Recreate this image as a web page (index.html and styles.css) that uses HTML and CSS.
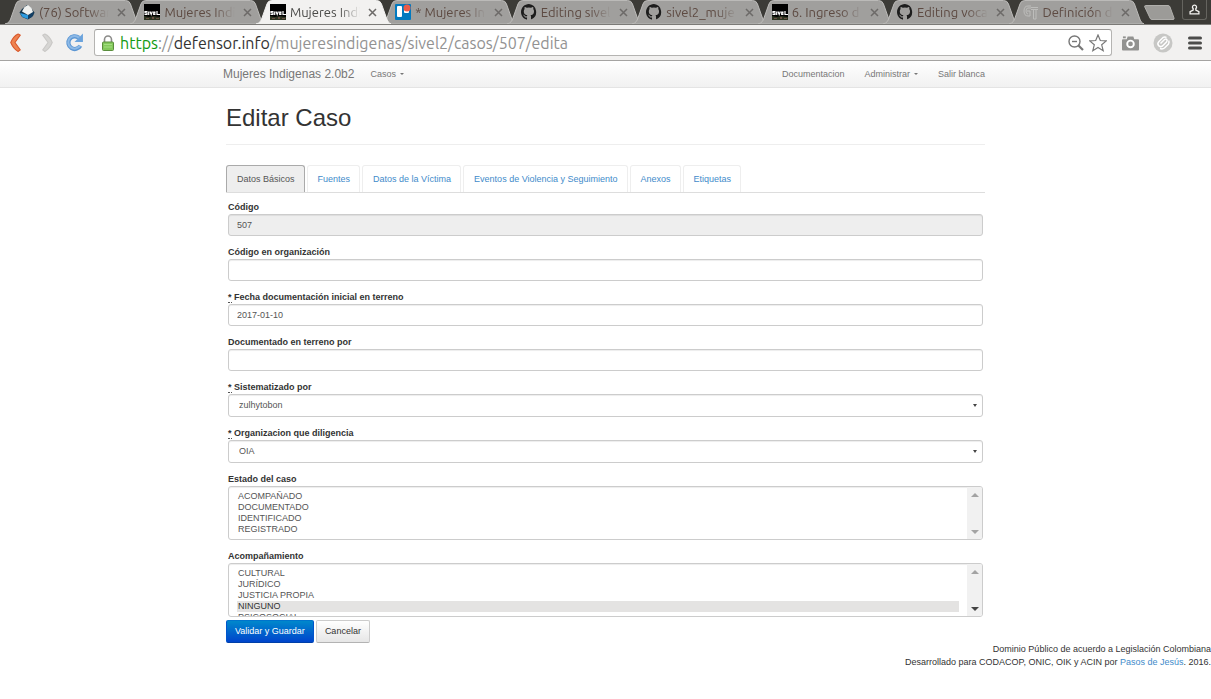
FILE: index.html
```html
<!DOCTYPE html>
<html lang="es">
<head>
<meta charset="utf-8">
<meta name="viewport" content="width=device-width, initial-scale=1">
<title>Mujeres Indigenas - Editar Caso</title>
<link rel="stylesheet" href="styles.css">
</head>
<body>
<svg class="defs" aria-hidden="true">
  <symbol id="tab-shape" viewBox="0 0 136 24" preserveAspectRatio="none">
    <path d="M0 24C4 23 5 21 6 18L11 4Q12 0.500 16 0.500H121Q125 0.500 126 4L131 18C132 21 133 23 136 24Z"/>
  </symbol>
  <symbol id="github" viewBox="0 0 16 16">
    <path d="M8 0C3.580 0 0 3.580 0 8c0 3.540 2.290 6.530 5.470 7.590.4.070.550-.170.550-.380V13.500c-2 .4-2.500-.9-2.700-1.300-.3-.5-.6-.8-.9-1-.3-.2-.6-.5 0-.5.6 0 1 .5 1.200.8.7 1.200 1.800.9 2.300.7.1-.5.3-.9.5-1.100-2-.2-3.600-.9-3.600-3.900 0-.9.3-1.600.8-2.200-.1-.2-.4-1 .1-2.100 0 0 .7-.2 2.200.8a7.500 7.500 0 0 1 4 0c1.500-1 2.200-.8 2.200-.8.5 1.100.2 1.900.1 2.100.5.6.8 1.300.8 2.200 0 3.100-1.800 3.700-3.600 3.900.3.300.6.800.6 1.500v2.200c0 .2.100.5.500.4A8 8 0 0 0 8 0Z"/>
  </symbol>
  <symbol id="sivel" viewBox="0 0 16 16">
    <path fill="#000" d="M0 0h16v16H0z"/>
    <path fill="#2d3421" d="M0 12l5 1 4-1 7 1v3H0z"/>
    <path fill="#684e43" d="M2 14h3v1H2zM8 13h2v2H8zM12 14h3v1h-3z"/>
    <path stroke="#fff" stroke-width="1.200" fill="none" d="M3.500 7.600H1V9h2v1.500H.5M4.700 7.500V11M6 7.500L7.200 10.500 8.400 7.500M11.500 8H9.700v2.500h1.800M9.500 9.200h2M13 7v3.500h3"/>
  </symbol>
  <symbol id="close" viewBox="0 0 9 9"><path d="M1 1l7 7M8 1L1 8" fill="none" stroke="currentColor" stroke-width="1.500"/></symbol>
</svg>

<header class="browser">
  <div class="tabstrip">
    <div class="tabs">
      <div class="tab"><svg class="shape"><use href="#tab-shape"/></svg>
        <svg class="fav" viewBox="0 0 16 16"><path fill="#17384f" d="M.5 8.500L3 5l5-4 4 3 3.500 4.500L14 12l-5 3.500L3 13z"/><path fill="#2d9be0" d="M1 9l8 2v4l-5.500-2z"/><path fill="#123f66" d="M9 11l6-3-2 5-4 2z"/><path fill="#f0f1ef" d="M3 7.500L5.500 3 9 1l3.500 3L14 8l-5 3z"/></svg>
        <span class="name">(76) Softwar</span><button class="x" aria-label="Cerrar"><svg><use href="#close"/></svg></button></div>
      <div class="tab"><svg class="shape"><use href="#tab-shape"/></svg><svg class="fav"><use href="#sivel"/></svg>
        <span class="name">Mujeres Indi</span><button class="x" aria-label="Cerrar"><svg><use href="#close"/></svg></button></div>
      <div class="tab active"><svg class="shape"><use href="#tab-shape"/></svg><svg class="fav"><use href="#sivel"/></svg>
        <span class="name">Mujeres Indi</span><button class="x" aria-label="Cerrar"><svg><use href="#close"/></svg></button></div>
      <div class="tab"><svg class="shape"><use href="#tab-shape"/></svg>
        <svg class="fav" viewBox="0 0 16 16"><rect width="16" height="16" rx="1" fill="#0079bf"/><rect x="2" y="2" width="5" height="11" rx="1" fill="#fff"/><rect x="9" y="2" width="5" height="7" rx="1" fill="#fff"/><circle cx="12" cy="4" r="3.500" fill="#eb5a46"/></svg>
        <span class="name">* Mujeres In</span><button class="x" aria-label="Cerrar"><svg><use href="#close"/></svg></button></div>
      <div class="tab"><svg class="shape"><use href="#tab-shape"/></svg><svg class="fav"><use href="#github"/></svg>
        <span class="name">Editing sivel</span><button class="x" aria-label="Cerrar"><svg><use href="#close"/></svg></button></div>
      <div class="tab"><svg class="shape"><use href="#tab-shape"/></svg><svg class="fav"><use href="#github"/></svg>
        <span class="name">sivel2_muje</span><button class="x" aria-label="Cerrar"><svg><use href="#close"/></svg></button></div>
      <div class="tab"><svg class="shape"><use href="#tab-shape"/></svg><svg class="fav"><use href="#sivel"/></svg>
        <span class="name">6. Ingreso d</span><button class="x" aria-label="Cerrar"><svg><use href="#close"/></svg></button></div>
      <div class="tab"><svg class="shape"><use href="#tab-shape"/></svg><svg class="fav"><use href="#github"/></svg>
        <span class="name">Editing voca</span><button class="x" aria-label="Cerrar"><svg><use href="#close"/></svg></button></div>
      <div class="tab"><svg class="shape"><use href="#tab-shape"/></svg>
        <svg class="fav outline" viewBox="0 0 16 16"><path d="M8 2H5Q1 2 1 7t4 5h2V7H4M8 4H5Q3 4 3 7t2 3M8 5.500h7M8 3.500h7M10.500 5.500V15M13 5.500V15M10.500 15H13"/></svg>
        <span class="name">Definición d</span><button class="x" aria-label="Cerrar"><svg><use href="#close"/></svg></button></div>
    </div>
    <button class="newtab" aria-label="Nueva pestaña"><svg viewBox="0 0 31 15"><path d="M1.500 .5H24Q25.500 .5 26 2l4 11q.5 1.500-1 1.500H8Q6.500 14.500 6 13L.8 2Q.3 .5 1.500 .5Z" fill="#9c9b98" stroke="#b0afac"/></svg></button>
    <button class="user" aria-label="Usuario"><svg viewBox="0 0 10 10"><path d="M5 1a1.800 1.800 0 0 1 1.200 3.200V5.500L9 7v2H1V7l2.800-1.500V4.200A1.800 1.800 0 0 1 5 1Z" fill="none" stroke="#f4f3f1" stroke-width="1.200"/></svg></button>
  </div>
  <div class="toolbar">
    <button class="tool back" aria-label="Atrás"><svg viewBox="0 0 12 18"><path d="M8.500 1l2 1L5.500 9l5 7-2 1.500Q4 15 1.500 9 4 3 8.500 1Z" fill="#ee8350" stroke="#d9572a"/></svg></button>
    <button class="tool fwd" aria-label="Adelante"><svg viewBox="0 0 12 18"><path d="M3.500 1l-2 1 5 7-5 7 2 1.500Q8 15 10.500 9 8 3 3.500 1Z" fill="#d6d5d3" stroke="#c9c8c6"/></svg></button>
    <button class="tool reload" aria-label="Recargar"><svg viewBox="0 0 18 18"><path d="M13 4.500A6 6 0 1 0 14.500 12" fill="none" stroke="#5b96d3" stroke-width="4"/><path d="M13.500 4.800A6 6 0 1 0 14.200 12" fill="none" stroke="#8db9e6" stroke-width="2"/><path d="M17 .5V8.500H9z" fill="#6ba3dc"/></svg></button>
    <div class="address">
      <svg class="lock" viewBox="0 0 12 16"><path d="M2.500 8V4.500a3.500 3.500 0 0 1 7 0V8" fill="none" stroke="#8b8b89" stroke-width="1.600"/><rect x=".5" y="7" width="11" height="8.500" rx="1" fill="#83c95b" stroke="#5a8d3d"/><path d="M2 9.500h8M2 12h8" stroke="#a5de83"/></svg>
      <div class="url" role="textbox" aria-label="Dirección" contenteditable="true" spellcheck="false"><span class="scheme">https</span>://<span class="host">defensor.info</span>/mujeresindigenas/sivel2/casos/507/edita</div>
      <svg class="zoom" viewBox="0 0 16 16" fill="none" stroke="#777"><circle cx="6.500" cy="6.500" r="5.500" stroke-width="1.400"/><path d="M4 6.500h5" stroke-width="1.400"/><path d="M10.500 10.500l4.500 4.500" stroke-width="2.200"/></svg>
      <svg class="star" viewBox="0 0 18 18"><path d="M9 1l2.300 5.500 6 .4-4.600 3.900 1.500 5.900L9 13.500l-5.200 3.200 1.500-5.900L.7 6.900l6-.4z" fill="#fff" stroke="#777" stroke-width="1.200"/></svg>
    </div>
    <button class="tool cam" aria-label="Captura"><svg viewBox="0 0 18 16"><path fill="#929290" d="M1 4h4l1-3h6l1 3h4q1 0 1 1v10q0 1-1 1H1q-1 0-1-1V5q0-1 1-1z"/><path fill="#929290" d="M1 1h3v2H1z"/><circle cx="9" cy="9" r="3.500" fill="#929290" stroke="#fff" stroke-width="2"/></svg></button>
    <button class="tool clip" aria-label="Extensión"><svg viewBox="0 0 20 20"><circle cx="10" cy="10" r="9.500" fill="#c7c7c5"/><path d="M7.500 10.500l4-4q1.500-1 2.300 0t-.3 2.500L9.500 13M9.500 13q-2.500 1.500-4-.5T6 8.500l4-4q2-1 3.500 0M7 15.500q2.500 1 4.500-.5l4-4q1-2 .2-3.500" fill="none" stroke="#fff" stroke-width="1.500"/></svg></button>
    <button class="tool menu" aria-label="Menú"><svg viewBox="0 0 14 14"><path d="M1.500 2h11M1.500 7h11M1.500 12h11" stroke="#4c4c4a" stroke-width="3" stroke-linecap="round"/></svg></button>
  </div>
</header>

<nav class="navbar">
  <div class="container nav-row">
    <a class="brand" href="#">Mujeres Indigenas 2.0b2</a>
    <a class="caret" href="#">Casos</a>
    <div class="nav-right">
      <a href="#">Documentacion</a>
      <a class="caret" href="#">Administrar</a>
      <a href="#">Salir blanca</a>
    </div>
  </div>
</nav>

<main class="container">
  <h1>Editar Caso</h1>
  <ul class="sections">
    <li><a class="current" href="#basicos">Datos Básicos</a></li>
    <li><a href="#fuentes">Fuentes</a></li>
    <li><a href="#victima">Datos de la Víctima</a></li>
    <li><a href="#eventos">Eventos de Violencia y Seguimiento</a></li>
    <li><a href="#anexos">Anexos</a></li>
    <li><a href="#etiquetas">Etiquetas</a></li>
  </ul>
  <form>
    <div class="fields" id="basicos">
      <div class="field"><label for="codigo">Código</label><input id="codigo" type="text" value="507" disabled></div>
      <div class="field"><label for="codorg">Código en organización</label><input id="codorg" type="text"></div>
      <div class="field"><label for="fecha"><abbr title="requerido">*</abbr> Fecha documentación inicial en terreno</label><input id="fecha" type="text" value="2017-01-10"></div>
      <div class="field"><label for="docpor">Documentado en terreno por</label><input id="docpor" type="text"></div>
      <div class="field"><label for="sispor"><abbr title="requerido">*</abbr> Sistematizado por</label><select class="drop" id="sispor"><option>zulhytobon</option></select></div>
      <div class="field"><label for="org"><abbr title="requerido">*</abbr> Organizacion que diligencia</label><select class="drop" id="org"><option>OIA</option></select></div>
      <div class="field"><label for="estado">Estado del caso</label>
        <div class="listbox">
          <select class="list" id="estado" multiple><option>ACOMPAÑADO</option><option>DOCUMENTADO</option><option>IDENTIFICADO</option><option>REGISTRADO</option></select>
          <div class="scroll" aria-hidden="true"><svg viewBox="0 0 8 4"><path d="M0 4h8L4 0z"/></svg><svg viewBox="0 0 8 4"><path d="M0 0h8L4 4z"/></svg></div>
        </div></div>
      <div class="field"><label for="acomp">Acompañamiento</label>
        <div class="listbox">
          <select class="list" id="acomp" multiple><option>CULTURAL</option><option>JURÍDICO</option><option>JUSTICIA PROPIA</option><option selected>NINGUNO</option><option>PSICOSOCIAL</option></select>
          <div class="scroll" aria-hidden="true"><svg viewBox="0 0 8 4"><path d="M0 4h8L4 0z"/></svg><svg class="on" viewBox="0 0 8 4"><path d="M0 0h8L4 4z"/></svg></div>
        </div></div>
    </div>
    <div class="actions"><button class="btn primary" type="submit">Validar y Guardar</button><button class="btn" type="button">Cancelar</button></div>
  </form>
</main>
<footer class="footer">
  <p>Dominio Público de acuerdo a Legislación Colombiana</p>
  <p>Desarrollado para CODACOP, ONIC, OIK y ACIN por <a href="#">Pasos de Jesús</a>. 2016.</p>
</footer>
</body>
</html>
```
FILE: styles.css
```css
* { box-sizing: border-box; }
body {
  margin: 0;
  background: #fff;
  color: #333;
  font: 9px/13px "Liberation Sans", Arial, sans-serif;
}
a { color: #428bca; text-decoration: none; }
button { font: inherit; }
.defs { display: none; }

/* Browser frame */
.browser { font-family: Ubuntu, Roboto, "Open Sans", sans-serif; }
.tabstrip {
  display: flex;
  align-items: center;
  height: 25px;
  padding: 0 4px 0 5px;
  background: #3c3b37;
  border-bottom: 1px solid #7b7a77;
}
.tabs { display: flex; flex: 1; align-self: flex-end; min-width: 0; }
.tab {
  position: relative;
  display: flex;
  align-items: center;
  flex: 1 1 0;
  min-width: 0;
  height: 24px;
  margin-right: -10px;
  padding: 0 14px;
  color: #5d4a42;
}
.tab:last-child { margin-right: 0; }
.shape {
  position: absolute;
  inset: 0;
  width: 100%;
  height: 100%;
  fill: #a09f9d;
  stroke: #bcbbb9;
}
.tab.active { z-index: 1; color: #4a4a48; }
.active .shape { fill: #f2f1f0; stroke: #f2f1f0; }
.fav { position: relative; flex: none; width: 16px; height: 16px; fill: #1d1d1d; }
.outline { fill: none; stroke: #bdbdbb; }
.name {
  position: relative;
  flex: 1;
  min-width: 0;
  margin-left: 4px;
  white-space: nowrap;
  font-size: 13px;
  line-height: 18px;
  mask-image: linear-gradient(to right, #000 70%, transparent);
}
.x {
  position: relative;
  display: flex;
  margin-left: 8px;
  padding: 0;
  border: 0;
  background: none;
  color: #6c6a68;
}
.x svg { width: 9px; height: 9px; }
.newtab { display: flex; padding: 0; border: 0; background: none; }
.newtab svg { width: 31px; height: 15px; }
.user {
  display: flex;
  justify-content: center;
  align-self: flex-start;
  width: 25px;
  height: 20px;
  margin-left: 7px;
  padding: 4px 0;
  border: 1px solid #65645f;
  border-top: 0;
  border-radius: 0 0 3px 3px;
  background: #3c3b37;
}
.user svg { width: 11px; height: 11px; }
.toolbar {
  display: flex;
  align-items: center;
  height: 36px;
  padding: 0 9px;
  background: #f2f1f0;
  border-bottom: 1px solid #a5a4a2;
}
.tool { display: flex; flex: none; padding: 0; border: 0; background: none; }
.back svg, .fwd svg { width: 13px; height: 19px; }
.fwd { margin-left: 19px; }
.reload { margin: 0 10px 0 11px; }
.reload svg { width: 19px; height: 19px; }
.address {
  display: flex;
  align-items: center;
  flex: 1;
  min-width: 0;
  height: 27px;
  padding: 0 4px 0 7px;
  border: 1px solid #b5b4b2;
  border-top-color: #979694;
  border-radius: 3px;
  background: #fff;
}
.lock { flex: none; width: 12px; height: 16px; }
.url {
  flex: 1;
  min-width: 0;
  margin-left: 6px;
  overflow: hidden;
  white-space: nowrap;
  color: #929292;
  font-size: 16px;
  line-height: 24px;
}
.scheme { color: #139a13; }
.host { color: #333; }
.zoom { width: 16px; height: 16px; }
.star { width: 18px; height: 18px; margin-left: 5px; }
.cam { margin-left: 10px; }
.cam svg { width: 17px; height: 16px; }
.clip { margin-left: 14px; }
.clip svg { width: 20px; height: 20px; }
.menu { margin-left: 15px; }
.menu svg { width: 14px; height: 14px; }

/* Site navigation */
.container { width: 100%; max-width: 759px; margin: 0 auto; }
.navbar {
  background: linear-gradient(#fff, #f1f1f1);
  border-bottom: 1px solid #e4e4e4;
}
.nav-row { display: flex; align-items: center; height: 26px; }
.navbar a { color: #777; }
.navbar .brand { margin: 0 16px 0 -3px; font-size: 12px; }
.nav-right { display: flex; gap: 20px; margin-left: auto; }
.caret::after {
  content: "";
  display: inline-block;
  margin-left: 4px;
  vertical-align: middle;
  border: 2px solid transparent;
  border-top-color: currentColor;
  border-bottom: 0;
}

/* Case form */
h1 {
  margin: 0 0 20px;
  padding: 15px 0 12px;
  border-bottom: 1px solid #eee;
  font-size: 24px;
  line-height: 29px;
  font-weight: 400;
}
.sections {
  display: flex;
  gap: 2px;
  margin: 0 0 8px;
  padding: 0;
  border-bottom: 1px solid #ddd;
  list-style: none;
}
.sections a {
  display: block;
  padding: 7px 9px 6px 10px;
  border: 1px solid #eee;
  border-bottom: 0;
  border-radius: 3px 3px 0 0;
}
.sections .current { background: #eee; border-color: #aaa; color: #555; }
.fields { display: flex; flex-direction: column; gap: 10px; padding: 0 2px; }
.field { display: flex; flex-direction: column; }
label { font-weight: 700; }
abbr { text-decoration: none; border-bottom: 1px dotted #555; }
input, .drop, .listbox {
  width: 100%;
  height: 22px;
  padding: 0 8px;
  border: 1px solid #ccc;
  border-radius: 3px;
  background-color: #fff;
  box-shadow: inset 0 1px 1px rgba(0, 0, 0, 0.075);
  color: #555;
  font: inherit;
}
input:disabled { background-color: #eee; }
.drop {
  height: 23px;
  padding-left: 10px;
  appearance: none;
  background-image: url("data:image/svg+xml,%3Csvg xmlns='http://www.w3.org/2000/svg' width='4' height='3'%3E%3Cpath d='M0 0h4L2 3z' fill='%23444'/%3E%3C/svg%3E");
  background-position: right 5px center;
  background-repeat: no-repeat;
}
.listbox { display: flex; height: 54px; padding: 0; overflow: hidden; }
.list {
  flex: 1;
  min-width: 0;
  height: 100%;
  padding: 4px 0 0;
  border: 0;
  background: transparent;
  color: inherit;
  font: inherit;
}
.list option {
  min-height: 11px;
  height: 11px;
  margin: 0 8px;
  padding: 0 1px;
  line-height: 11px;
}
.list option:checked { background: #e4e3e2 linear-gradient(#e4e3e2, #e4e3e2); color: #333; }
.scroll {
  display: flex;
  flex-direction: column;
  align-items: center;
  justify-content: space-between;
  width: 15px;
  padding: 6px 0 5px;
  background: #f1f1f1;
}
.scroll svg { width: 8px; height: 4px; fill: #a3a3a3; }
.scroll .on { fill: #444; }
.actions { display: flex; gap: 2px; margin-top: 3px; }
.btn {
  height: 23px;
  padding: 0 8px;
  border: 1px solid #ccc;
  border-bottom-color: #b3b3b3;
  border-radius: 2px;
  background: linear-gradient(#fff, #e6e6e6);
  color: #333;
}
.primary {
  border-color: #0074cc #05c #003fa8;
  background: linear-gradient(#08c, #04c);
  color: #fff;
}
.footer { text-align: right; }
.footer p { margin: 0; }
```
